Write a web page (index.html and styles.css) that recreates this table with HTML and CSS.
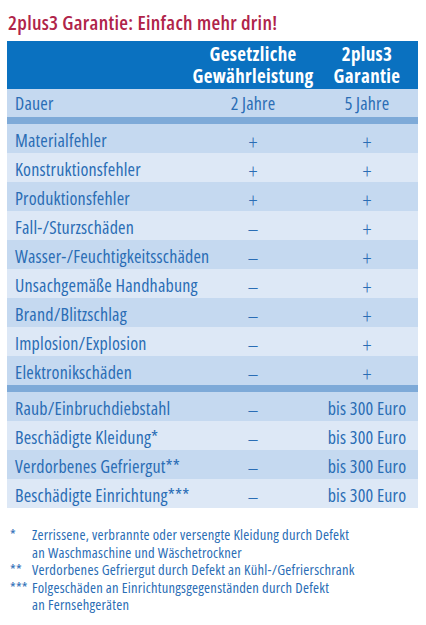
FILE: index.html
```html
<!DOCTYPE html>
<html lang="de">
<head>
    <meta charset="UTF-8">
    <meta name="viewport" content="width=device-width, initial-scale=1.0">
    <title>2plus3 Garantie</title>
    <link rel="stylesheet" href="styles.css">
</head>
<body>
    <h1 class="title">2plus3 Garantie: Einfach mehr drin!</h1>

    <!-- Vergleichstabelle -->
    <div class="compare">
        <div class="row head">
            <div class="cell label"></div>
            <div class="cell">Gesetzliche<br>Gewährleistung</div>
            <div class="cell">2plus3<br>Garantie</div>
        </div>
        <div class="row dark">
            <div class="cell label">Dauer</div>
            <div class="cell">2 Jahre</div>
            <div class="cell">5 Jahre</div>
        </div>
        <div class="divider"></div>
        <div class="row dark">
            <div class="cell label">Materialfehler</div>
            <div class="cell sym">+</div>
            <div class="cell sym">+</div>
        </div>
        <div class="row light">
            <div class="cell label">Konstruktionsfehler</div>
            <div class="cell sym">+</div>
            <div class="cell sym">+</div>
        </div>
        <div class="row dark">
            <div class="cell label">Produktionsfehler</div>
            <div class="cell sym">+</div>
            <div class="cell sym">+</div>
        </div>
        <div class="row light">
            <div class="cell label">Fall-/Sturzschäden</div>
            <div class="cell sym">–</div>
            <div class="cell sym">+</div>
        </div>
        <div class="row dark">
            <div class="cell label">Wasser-/Feuchtigkeitsschäden</div>
            <div class="cell sym">–</div>
            <div class="cell sym">+</div>
        </div>
        <div class="row light">
            <div class="cell label">Unsachgemäße Handhabung</div>
            <div class="cell sym">–</div>
            <div class="cell sym">+</div>
        </div>
        <div class="row dark">
            <div class="cell label">Brand/Blitzschlag</div>
            <div class="cell sym">–</div>
            <div class="cell sym">+</div>
        </div>
        <div class="row light">
            <div class="cell label">Implosion/Explosion</div>
            <div class="cell sym">–</div>
            <div class="cell sym">+</div>
        </div>
        <div class="row dark">
            <div class="cell label">Elektronikschäden</div>
            <div class="cell sym">–</div>
            <div class="cell sym">+</div>
        </div>
        <div class="divider"></div>
        <div class="row dark">
            <div class="cell label">Raub/Einbruchdiebstahl</div>
            <div class="cell sym">–</div>
            <div class="cell">bis 300 Euro</div>
        </div>
        <div class="row light">
            <div class="cell label">Beschädigte Kleidung*</div>
            <div class="cell sym">–</div>
            <div class="cell">bis 300 Euro</div>
        </div>
        <div class="row dark">
            <div class="cell label">Verdorbenes Gefriergut**</div>
            <div class="cell sym">–</div>
            <div class="cell">bis 300 Euro</div>
        </div>
        <div class="row light">
            <div class="cell label">Beschädigte Einrichtung***</div>
            <div class="cell sym">–</div>
            <div class="cell">bis 300 Euro</div>
        </div>
    </div>

    <!-- Fussnoten -->
    <ul class="notes">
        <li><span class="mark">*</span><span>Zerrissene, verbrannte oder versengte Kleidung durch Defekt<br>an Waschmaschine und Wäschetrockner</span></li>
        <li><span class="mark">**</span><span>Verdorbenes Gefriergut durch Defekt an Kühl-/Gefrierschrank</span></li>
        <li><span class="mark">***</span><span>Folgeschäden an Einrichtungsgegenständen durch Defekt<br>an Fernsehgeräten</span></li>
    </ul>
</body>
</html>
```

FILE: styles.css
```css
body {
    margin: 0;
    padding: 12px 8px 0 7px;
    background-color: white;
    font-family: "Open Sans", "Liberation Sans", Arial, sans-serif;
    font-stretch: 75%;
    color: #2a6db5;
}

.title {
    margin: 0 0 7px 1px;
    font-size: 20px;
    line-height: 22px;
    font-weight: 600;
    letter-spacing: 0.3px;
    color: #b0244a;
}

.compare {
    width: 411px;
}

.row {
    display: grid;
    grid-template-columns: 183px 126px 102px;
    height: 29px;
    align-items: center;
    font-size: 18px;
    letter-spacing: 0.2px;
}

.row.dark {
    background-color: #c5d9f0;
}

.row.light {
    background-color: #dde8f6;
}

.row.head {
    height: 48px;
    background-color: #0a71c0;
    color: white;
    font-size: 19px;
    font-weight: 700;
    letter-spacing: 0.35px;
    line-height: 22px;
}

.row.head + .row {
    height: 28px;
}

.cell {
    text-align: center;
    white-space: nowrap;
}

.cell.sym {
    font-size: 22px;
    font-weight: 300;
    padding-top: 2px;
}

.cell.label {
    text-align: left;
    padding-left: 8px;
}

.divider {
    height: 7px;
    background-color: #7eaad8;
}

.notes {
    list-style: none;
    margin: 18px 0 0 3px;
    padding: 0;
    font-size: 14.5px;
    letter-spacing: 0.25px;
    line-height: 17.5px;
}

.notes li {
    display: flex;
}

.notes .mark {
    width: 22px;
    flex-shrink: 0;
}
```
